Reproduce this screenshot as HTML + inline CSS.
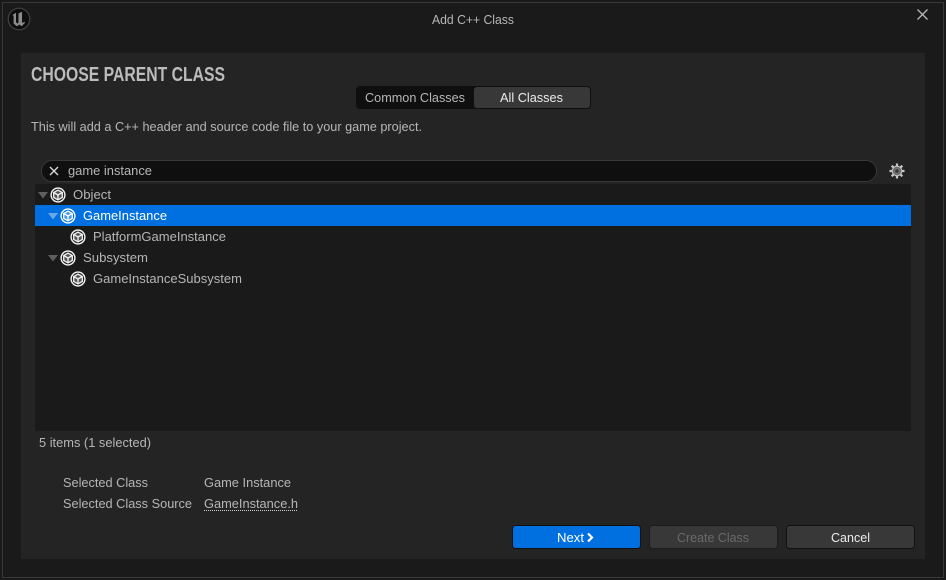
<!DOCTYPE html>
<html lang="en">
<head>
<meta charset="utf-8">
<title>Add C++ Class</title>
<style>
html,body{margin:0;padding:0;width:946px;height:580px;overflow:hidden;background:#1a1a1a}
svg{display:block}
text{font-family:"Liberation Sans",sans-serif;font-size:12.5px;fill:#b6b6b6}
</style>
</head>
<body>
<svg width="946" height="580" viewBox="0 0 946 580" xmlns="http://www.w3.org/2000/svg">
<defs>
<g id="cube">
<circle r="7.6" fill="#f4f4f4"/>
<circle r="6.2" fill="#1f1f1f"/>
<path d="M0-4.900 4.300-2.500V2.500L0 4.900-4.300 2.500V-2.500Z" fill="#555" stroke="#f4f4f4" stroke-width="1.300"/>
<path d="M-4.200-2.400 0 0 4.200-2.400M0 0V4.800" fill="none" stroke="#f4f4f4" stroke-width="1.300"/>
</g>
<g id="cubeSel">
<circle r="7.6" fill="#fff"/>
<circle r="6.2" fill="#0070e0"/>
<path d="M0-4.900 4.300-2.500V2.500L0 4.900-4.300 2.500V-2.500Z" fill="#4a9ae8" stroke="#fff" stroke-width="1.300"/>
<path d="M-4.200-2.400 0 0 4.200-2.400M0 0V4.800" fill="none" stroke="#fff" stroke-width="1.300"/>
</g>
</defs>

<!-- window -->
<rect x="0" y="0" width="946" height="580" fill="#1a1a1a"/>
<rect x="2.500" y="2.500" width="941" height="575" fill="#1a1a1a" stroke="#383838"/>

<!-- logo -->
<circle cx="19" cy="19" r="10.800" fill="#0e0e0e" stroke="#444" stroke-width="1.200"/>
<path d="M12.500 15 16 12.800V22.300L17.300 23.500 18.500 22.800V13.500L22 11.800V22.300L22.800 23 24.200 21.600 25 22.600 21.800 26.200 19.300 24.600 16.800 26.200 13.600 23.600V16Z" fill="#8c8c8c"/>

<!-- title -->
<text x="432" y="24" textLength="82" lengthAdjust="spacingAndGlyphs">Add C++ Class</text>

<!-- close -->
<path d="M917.500 9.500 927.500 19.500M927.500 9.500 917.500 19.500" stroke="#b8b8b8" stroke-width="1.300" fill="none"/>

<!-- panel -->
<rect x="21" y="53" width="904" height="506" fill="#242424"/>
<text x="31" y="81" textLength="194" lengthAdjust="spacingAndGlyphs" style="font-size:20.500px;font-weight:700;fill:#bcbcbc">CHOOSE PARENT CLASS</text>

<!-- segmented -->
<rect x="356" y="86" width="235" height="23" rx="4" fill="#0f0f0f"/>
<rect x="474" y="87" width="116" height="21" rx="3" fill="#383838"/>
<text x="365" y="102" textLength="100" lengthAdjust="spacingAndGlyphs">Common Classes</text>
<text x="500" y="102" textLength="63" lengthAdjust="spacingAndGlyphs" style="fill:#ececec">All Classes</text>

<text x="31" y="131" textLength="391" lengthAdjust="spacingAndGlyphs">This will add a C++ header and source code file to your game project.</text>

<!-- search -->
<rect x="41.500" y="160.500" width="835" height="21" rx="10.500" fill="#0f0f0f" stroke="#383838"/>
<path d="M50 167 58 175M58 167 50 175" stroke="#d8d8d8" stroke-width="1.400" fill="none"/>
<text x="68" y="175" textLength="84" lengthAdjust="spacingAndGlyphs">game instance</text>

<!-- gear -->
<g transform="translate(897 171)">
<path d="M0-7.500V-4.500M0 7.500V4.500M-7.500 0H-4.500M7.500 0H4.500M-5.300-5.300-3.200-3.200M5.300 5.300 3.200 3.200M-5.300 5.300-3.200 3.200M5.300-5.300 3.200-3.200" stroke="#c8c8c8" stroke-width="2.200"/>
<circle r="4.800" fill="#6a6a6a" stroke="#c0c0c0" stroke-width="1.100"/>
<circle r="2.300" fill="#3a3a3a" stroke="#808080" stroke-width=".8"/>
</g>

<!-- tree -->
<rect x="35" y="184" width="876" height="247" fill="#1a1a1a"/>
<rect x="35" y="205" width="876" height="21" fill="#0070e0"/>

<path d="M38 192H48L43 198.500Z" fill="#5e5e5e"/>
<use href="#cube" x="58" y="195"/>
<text x="73" y="199" textLength="38" lengthAdjust="spacingAndGlyphs">Object</text>

<path d="M48 213H58L53 219.500Z" fill="#6aa8ea"/>
<use href="#cubeSel" x="68" y="216"/>
<text x="83" y="220" textLength="84" lengthAdjust="spacingAndGlyphs" style="fill:#fff">GameInstance</text>

<use href="#cube" x="78" y="237"/>
<text x="93" y="241" textLength="133" lengthAdjust="spacingAndGlyphs">PlatformGameInstance</text>

<path d="M48 255H58L53 261.500Z" fill="#5e5e5e"/>
<use href="#cube" x="68" y="258"/>
<text x="83" y="262" textLength="65" lengthAdjust="spacingAndGlyphs">Subsystem</text>

<use href="#cube" x="78" y="279"/>
<text x="93" y="283" textLength="149" lengthAdjust="spacingAndGlyphs">GameInstanceSubsystem</text>

<!-- status -->
<text x="39" y="447" textLength="112" lengthAdjust="spacingAndGlyphs">5 items (1 selected)</text>

<text x="63" y="487" textLength="85" lengthAdjust="spacingAndGlyphs">Selected Class</text>
<text x="204" y="487" textLength="87" lengthAdjust="spacingAndGlyphs">Game Instance</text>
<text x="63" y="508" textLength="129" lengthAdjust="spacingAndGlyphs">Selected Class Source</text>
<text x="204" y="508" textLength="94" lengthAdjust="spacingAndGlyphs">GameInstance.h</text>
<path d="M204 510.500H297" stroke="#d0d0d0" stroke-width="1" stroke-dasharray="1 1"/>

<!-- buttons -->
<rect x="512.500" y="525.500" width="128" height="23" rx="3" fill="#0070e0" stroke="#111"/>
<text x="557" y="542" textLength="27" lengthAdjust="spacingAndGlyphs" style="fill:#fff">Next</text>
<path d="M588 533.500 592 537.500 588 541.500" fill="none" stroke="#fff" stroke-width="2.200"/>

<rect x="649.500" y="525.500" width="128" height="23" rx="3" fill="#383838" stroke="#1c1c1c"/>
<text x="677" y="542" textLength="72" lengthAdjust="spacingAndGlyphs" style="fill:#6a6a6a">Create Class</text>

<rect x="786.500" y="525.500" width="128" height="23" rx="3" fill="#383838" stroke="#111"/>
<text x="831" y="542" textLength="39" lengthAdjust="spacingAndGlyphs" style="fill:#ececec">Cancel</text>
</svg>
</body>
</html>
